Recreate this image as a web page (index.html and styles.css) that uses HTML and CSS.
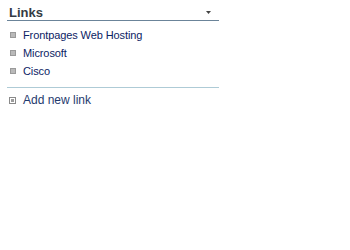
FILE: index.html
```html
<!DOCTYPE html>
<html>
<head>
<meta charset="utf-8">
<link rel="stylesheet" href="styles.css">
</head>
<body>
<div class="webpart">
  <div class="header">
    <span class="title">Links</span>
    <svg class="arrow" width="5" height="3" viewBox="0 0 5 3"><path d="M0 0H5L2.5 3Z" fill="#444"/></svg>
  </div>
  <ul class="links">
    <li><span class="bullet"></span><a href="#">Frontpages Web Hosting</a></li>
    <li><span class="bullet"></span><a href="#">Microsoft</a></li>
    <li><span class="bullet"></span><a href="#">Cisco</a></li>
  </ul>
  <div class="footer">
    <span class="addicon"></span><a href="#">Add new link</a>
  </div>
</div>
</body>
</html>
```
FILE: styles.css
```css
html, body { margin: 0; padding: 0; background: #fff; }
body { font-family: "Liberation Sans", Arial, sans-serif; }
.webpart { width: 212px; margin: 0 0 0 7px; padding-top: 5px; }
.header {
  display: flex; align-items: center; justify-content: space-between;
  height: 15px; padding: 0 8px 0 2px;
  border-bottom: 1px solid #6b8499;
}
.title { font-size: 13px; font-weight: bold; color: #343b44; }
.arrow { display: block; }
.links { list-style: none; margin: 0; padding: 5px 0 7px 2px; }
.links li { display: flex; align-items: center; height: 18px; }
.links a { color: #0c2364; text-decoration: none; font-size: 11px; letter-spacing: -0.1px; }
.bullet {
  width: 4px; height: 4px; background: #b9b9b9; border: 1px solid #9a9a9a;
  margin: 0 7px 0 1px;
}
.footer {
  display: flex; align-items: center; border-top: 1px solid #aecbd6;
  padding: 3px 0 0 2px; height: 18px;
}
.footer a { color: #1f3a6e; text-decoration: none; font-size: 12px; }
.addicon {
  width: 5px; height: 5px; border: 1px solid #8a8a8a; background: #fff;
  box-shadow: inset 0 0 0 1px #fff, inset 0 0 0 3px #9c9c9c;
  margin: 0 7px 0 0;
}
```
